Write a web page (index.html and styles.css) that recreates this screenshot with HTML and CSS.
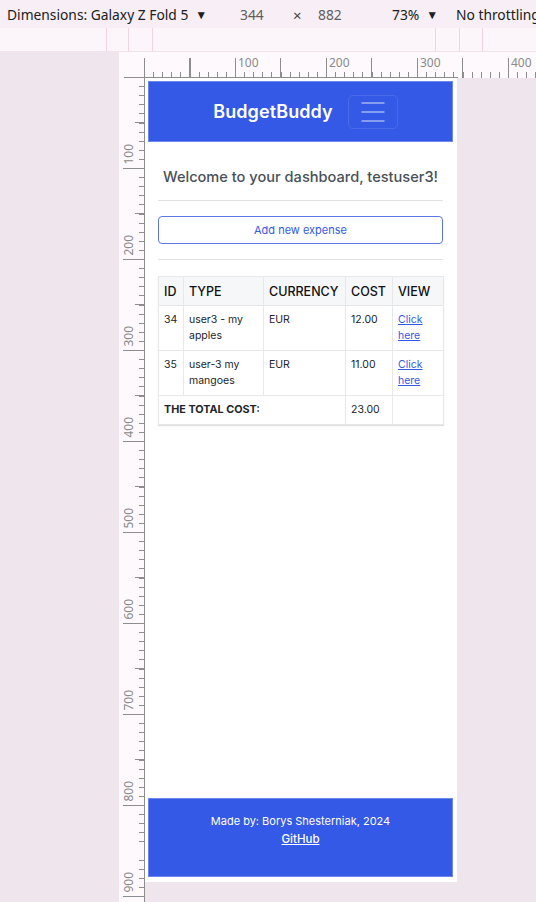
FILE: index.html
```html
<!DOCTYPE html>
<html lang="en">
<head>
<meta charset="utf-8">
<title>BudgetBuddy – device mode</title>
<link rel="stylesheet" href="styles.css">
</head>
<body>
<div class="toolbar">
  <span class="dim">Dimensions: Galaxy Z Fold 5<span class="caret">▼</span></span>
  <span class="num num-w">344</span>
  <span class="times">×</span>
  <span class="num num-h">882</span>
  <span class="zoom">73%<span class="caret">▼</span></span>
  <span class="throttle">No throttling</span>
</div>
<div class="mqbar">
  <div class="mq"></div><div class="mq"></div><div class="mq"></div><div class="mq"></div><div class="mq"></div><div class="mq"></div><div class="mq"></div>
</div>
<div class="workspace">
  <div class="gutter"></div>
  <div class="ruler-top">
    <span class="hlabel">100</span><span class="hlabel">200</span><span class="hlabel">300</span><span class="hlabel">400</span>
  </div>
  <div class="ruler-left">
    <div class="vseg"><span class="vlabel">100</span></div>
    <div class="vseg"><span class="vlabel">200</span></div>
    <div class="vseg"><span class="vlabel">300</span></div>
    <div class="vseg"><span class="vlabel">400</span></div>
    <div class="vseg"><span class="vlabel">500</span></div>
    <div class="vseg"><span class="vlabel">600</span></div>
    <div class="vseg"><span class="vlabel">700</span></div>
    <div class="vseg"><span class="vlabel">800</span></div>
    <div class="vseg"><span class="vlabel">900</span></div>
  </div>
  <div class="canvas">
    <div class="frame">
      <nav class="navbar">
        <span class="brand">BudgetBuddy</span>
        <button class="toggler" type="button" aria-label="Toggle navigation">
          <svg width="24" height="20" viewBox="0 0 24 20"><path d="M0.5 1h23M0.5 10h23M0.5 19h23" stroke="rgba(255,255,255,0.55)" stroke-width="1.6" fill="none"/></svg>
        </button>
      </nav>
      <main class="main">
        <h2 class="welcome">Welcome to your dashboard, testuser3!</h2>
        <hr class="rule">
        <a class="btn-outline" href="#">Add new expense</a>
        <hr class="rule rule-2">
        <table class="expenses">
          <colgroup><col class="c-id"><col class="c-type"><col class="c-cur"><col class="c-cost"><col class="c-view"></colgroup>
          <thead>
            <tr><th>ID</th><th>TYPE</th><th>CURRENCY</th><th>COST</th><th>VIEW</th></tr>
          </thead>
          <tbody>
            <tr><td>34</td><td>user3 - my apples</td><td>EUR</td><td>12.00</td><td><a href="#">Click here</a></td></tr>
            <tr><td>35</td><td>user-3 my mangoes</td><td>EUR</td><td>11.00</td><td><a href="#">Click here</a></td></tr>
            <tr class="total"><td colspan="3"><strong>THE TOTAL COST:</strong></td><td>23.00</td><td></td></tr>
          </tbody>
        </table>
      </main>
      <footer class="footer">
        <p class="made">Made by: Borys Shesterniak, 2024</p>
        <a class="gh" href="#">GitHub</a>
      </footer>
    </div>
  </div>
</div>
</body>
</html>
```
FILE: styles.css
```css
* { box-sizing: border-box; }
html, body { margin: 0; padding: 0; }
body {
  width: 536px;
  height: 902px;
  overflow: hidden;
  background: #efe6ed;
  font-family: "Noto Sans", "Open Sans", sans-serif;
}

/* DevTools toolbar */
.toolbar {
  height: 28px;
  background: #f7eff5;
  display: flex;
  align-items: center;
  padding-left: 7px;
  font-size: 13.8px;
  color: #202020;
  white-space: nowrap;
  overflow: hidden;
}
.toolbar > span { flex: none; }
.caret { font-size: 12px; margin-left: 7px; position: relative; top: -1px; }
.dim { width: 233px; }
.num { color: #5e5e5e; }
.num-w { width: 53px; }
.times { width: 25px; font-size: 15px; color: #444; position: relative; top: 1px; }
.num-h { width: 74px; }
.zoom { width: 64px; }
.throttle { flex: 1 1 auto; min-width: 0; }

.mqbar {
  height: 24px;
  background: #fcf5fa;
  border-bottom: 1px solid #f2e2eb;
  display: grid;
  grid-template-columns: 106px 22px 24px 283px 24px 23px 54px;
}
.mq + .mq { border-left: 1px solid #f4d3e1; }

/* Workspace with rulers */
.workspace {
  height: 850px;
  display: grid;
  grid-template-columns: 119px 26px 1fr;
  grid-template-rows: 26px 1fr;
}
.gutter { grid-row: 1 / 3; grid-column: 1; }
.ruler-top {
  grid-row: 1; grid-column: 2 / 4;
  background-color: #fdf9fc;
  background-image:
    linear-gradient(#8d8d8d, #8d8d8d),
    repeating-linear-gradient(to right, #8d8d8d 0 1px, transparent 1px 9.1px),
    repeating-linear-gradient(to right, #8d8d8d 0 1px, transparent 1px 45.5px);
  background-repeat: no-repeat;
  background-position: 5px 100%, 25px 100%, 25px 100%;
  background-size: 334px 1px, calc(100% - 25px) 6px, calc(100% - 25px) 20px;
  display: flex;
  padding-left: 116px;
  overflow: hidden;
}
.hlabel {
  flex: none;
  width: 91px;
  padding: 4px 0 0 3px;
  font-size: 12px;
  line-height: 14px;
  color: #8a8a8a;
}
.ruler-left {
  grid-row: 2; grid-column: 2;
  background-color: #fdf9fc;
  border-right: 1px solid #8d8d8d;
  background-image:
    repeating-linear-gradient(to bottom, transparent 0 8.1px, #8d8d8d 8.1px 9.1px),
    repeating-linear-gradient(to bottom, transparent 0 44.5px, #8d8d8d 44.5px 45.5px),
    repeating-linear-gradient(to bottom, transparent 0 90px, #8d8d8d 90px 91px);
  background-repeat: no-repeat;
  background-position: 100% 0, 100% 0, 100% 0;
  background-size: 5px 100%, 9px 100%, 21px 100%;
  display: flex;
  flex-direction: column;
  overflow: hidden;
}
.vseg {
  flex: none;
  height: 91px;
  display: flex;
  align-items: flex-end;
  padding: 0 0 3px 3px;
}
.vseg:first-child { height: 90px; }
.vlabel {
  writing-mode: vertical-rl;
  transform: rotate(180deg);
  font-size: 12px;
  line-height: 13px;
  color: #8a8a8a;
}
.canvas { grid-row: 2; grid-column: 3; }

/* Emulated page */
.frame {
  width: 312px;
  height: 804px;
  background: #fff;
  padding: 3px 4px 5px 3px;
  display: flex;
  flex-direction: column;
  font-family: Inter, "Noto Sans", sans-serif;
}
.navbar {
  height: 61px;
  flex: none;
  background: #3459e6;
  border: 1px solid #6c87ec;
  display: flex;
  align-items: center;
  justify-content: center;
  gap: 15px;
  padding-left: 10px;
}
.brand {
  color: #fff;
  font-size: 18px;
  font-weight: 600;
  letter-spacing: 0.1px;
}
.toggler {
  width: 50px;
  height: 34px;
  border: 1px solid rgba(255,255,255,0.1);
  border-radius: 5px;
  background: transparent;
  display: flex;
  align-items: center;
  justify-content: center;
  padding: 0;
}
.main {
  flex: 1;
  padding: 0 10px;
}
.welcome {
  margin: 24px 0 0;
  font-size: 14.6px;
  line-height: 22px;
  font-weight: 500;
  color: #495057;
  text-align: center;
}
.rule {
  margin: 12px 0 0;
  border: 0;
  border-top: 1px solid #e1e1e3;
  height: 0;
}
.rule-2 { margin-top: 15px; }
.btn-outline {
  display: flex;
  align-items: center;
  justify-content: center;
  margin-top: 15px;
  height: 28px;
  border: 1px solid #5b77e4;
  border-radius: 4px;
  color: #3459e6;
  font-size: 11px;
  font-weight: 400;
  text-decoration: none;
}
.expenses {
  margin-top: 16px;
  width: 285px;
  border-collapse: collapse;
  table-layout: fixed;
  box-shadow: 0 1px 1px rgba(0,0,0,0.12);
  color: #212529;
}
.c-id { width: 25px; }
.c-type { width: 80px; }
.c-cur { width: 82px; }
.c-cost { width: 47px; }
.c-view { width: 51px; }
.expenses th, .expenses td {
  border: 1px solid #e7e8ea;
  text-align: left;
  vertical-align: top;
  padding: 0 5px;
}
.expenses th {
  height: 29px;
  vertical-align: middle;
  background: #f6f7f9;
  font-size: 12.5px;
  font-weight: 500;
  color: #111;
}
.expenses td {
  height: 45px;
  padding-top: 6px;
  font-size: 10.5px;
  line-height: 16px;
}
.expenses td a { color: #3459e6; }
.expenses .total td {
  height: 29px;
  vertical-align: middle;
  padding-top: 0;
}
.total strong { font-weight: 700; font-size: 10.8px; }
.footer {
  flex: none;
  height: 79px;
  background: #3459e6;
  border: 1px solid #6c87ec;
  display: flex;
  flex-direction: column;
  align-items: center;
  padding-top: 13px;
  color: #fff;
}
.made {
  margin: 0;
  font-size: 11px;
  line-height: 18px;
}
.gh {
  color: #fff;
  font-size: 11.5px;
  font-weight: 500;
  line-height: 18px;
}
```
